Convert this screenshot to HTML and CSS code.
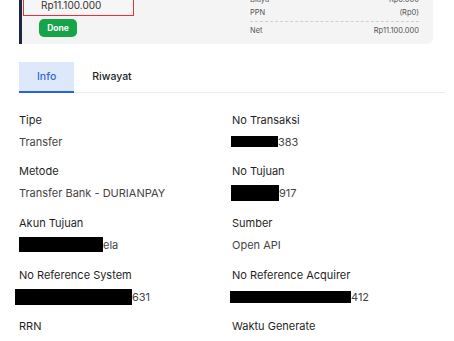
FILE: index.html
```html
<!DOCTYPE html>
<html>
<head>
<meta charset="utf-8">
<link rel="stylesheet" href="styles.css">
</head>
<body>
<div class="page">
  <div class="card">
    <div class="card-left">
      <div class="amount-box">
        <div class="amount">Rp11.100.000</div>
      </div>
      <span class="done">Done</span>
    </div>
    <div class="card-right">
      <div class="sum-row"><span>Biaya</span><span>Rp0.000</span></div>
      <div class="sum-row"><span>PPN</span><span>(Rp0)</span></div>
      <div class="sum-row net"><span>Net</span><span>Rp11.100.000</span></div>
    </div>
  </div>

  <div class="tabs">
    <div class="tab active">Info</div>
    <div class="tab">Riwayat</div>
  </div>

  <div class="info-grid">
    <div class="field">
      <div class="label">Tipe</div>
      <div class="value">Transfer</div>
    </div>
    <div class="field">
      <div class="label">No Transaksi</div>
      <div class="value"><span class="redact r-trx"></span>383</div>
    </div>
    <div class="field">
      <div class="label">Metode</div>
      <div class="value">Transfer Bank - DURIANPAY</div>
    </div>
    <div class="field">
      <div class="label">No Tujuan</div>
      <div class="value"><span class="redact r-tuj"></span>917</div>
    </div>
    <div class="field">
      <div class="label">Akun Tujuan</div>
      <div class="value"><span class="redact r-akun"></span>ela</div>
    </div>
    <div class="field">
      <div class="label">Sumber</div>
      <div class="value">Open API</div>
    </div>
    <div class="field">
      <div class="label">No Reference System</div>
      <div class="value"><span class="redact r-sys"></span>631</div>
    </div>
    <div class="field">
      <div class="label">No Reference Acquirer</div>
      <div class="value"><span class="redact r-acq"></span>412</div>
    </div>
    <div class="field">
      <div class="label">RRN</div>
      <div class="value">-</div>
    </div>
    <div class="field">
      <div class="label">Waktu Generate</div>
      <div class="value">-</div>
    </div>
  </div>
</div>
</body>
</html>
```

FILE: styles.css
```css
* { box-sizing: border-box; }
html, body { margin: 0; padding: 0; background: #ffffff; }
body {
  font-family: Inter, "Noto Sans", sans-serif;
  color: #222;
  overflow: hidden;
}
.page {
  padding: 0 9px 0 19px;
}
.card {
  margin-top: -34.5px;
  margin-right: 12px;
  background: #f4f4f4;
  border-left: 3px solid #1b2747;
  border-radius: 0 0 6px 0;
  display: flex;
  align-items: flex-end;
  justify-content: space-between;
  padding: 10px 14px 7px 0;
}
.card-left {
  display: flex;
  flex-direction: column;
  align-items: flex-start;
}
.amount-box {
  margin-left: 1px;
  width: 111px;
  height: 40px;
  border: 1px solid #ea2f38;
  background: #f6f6f6;
  padding: 0 0 3px 17px;
  display: flex;
  flex-direction: column;
  justify-content: flex-end;
}
.amount {
  font-size: 10px;
  line-height: 14px;
  color: #333;
}
.done {
  margin: 3.5px 0 0 17px;
  width: 38px;
  height: 18px;
  border-radius: 5px;
  background: #16a34a;
  color: #fff;
  font-size: 8.5px;
  font-weight: 700;
  display: flex;
  align-items: center;
  justify-content: center;
}
.card-right {
  width: 169px;
  font-size: 7.5px;
  color: #555;
}
.sum-row {
  display: flex;
  justify-content: space-between;
  line-height: 13px;
}
.sum-row.net {
  margin-top: 2.5px;
  padding-top: 2px;
  border-top: 1px dashed #cfcfcf;
}
.tabs {
  margin-top: 18px;
  display: flex;
  border-bottom: 1px solid #ececec;
}
.tab {
  height: 31px;
  padding: 0 18px;
  display: flex;
  align-items: center;
  font-size: 10.5px;
  font-weight: 500;
  color: #222;
  border-bottom: 2px solid transparent;
  margin-bottom: -1px;
}
.tab.active {
  background: #dde9fb;
  color: #2f6ad6;
  border-bottom-color: #2563d9;
}
.info-grid {
  margin-top: 18.5px;
  display: grid;
  grid-template-columns: 1fr 1fr;
  row-gap: 13.7px;
}
.label {
  font-size: 11px;
  line-height: 16px;
  color: #1f1f1f;
}
.value {
  margin-top: 6px;
  font-size: 11px;
  line-height: 16px;
  color: #444;
  display: flex;
  align-items: center;
}
.redact {
  display: inline-block;
  background: #000;
}
.r-trx { width: 47px; height: 11px; margin-left: -1px; }
.r-tuj { width: 48px; height: 16px; margin-left: -1px; }
.r-akun { width: 84px; height: 15px; }
.r-sys { width: 117px; height: 16px; margin-left: -4px; }
.r-acq { width: 121px; height: 12px; margin-left: -2px; }
```
